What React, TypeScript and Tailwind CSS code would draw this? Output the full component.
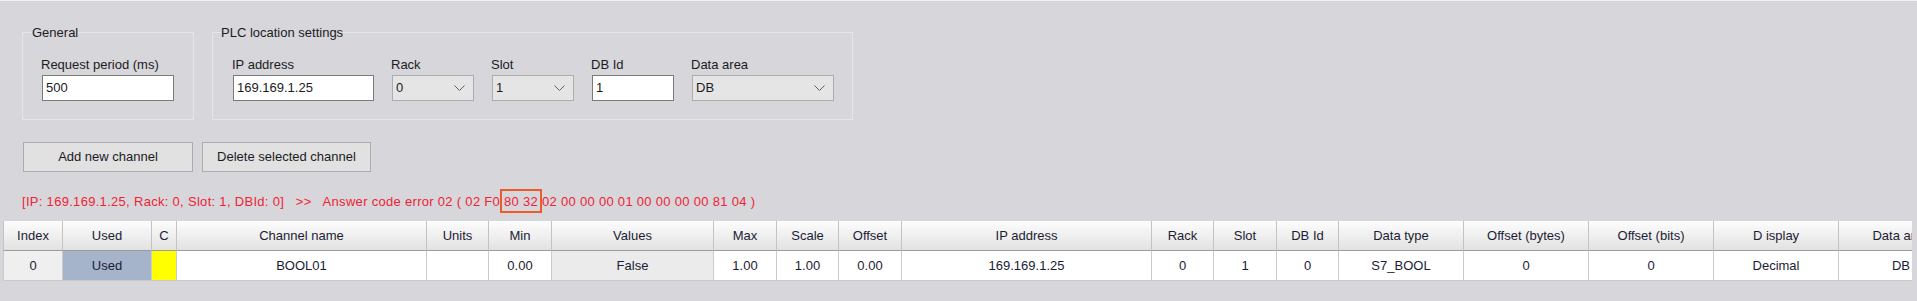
import React from 'react';

const columns = [
  { title: 'Index', w: 'w-[60px]', value: '0', cell: 'bg-[#efefef]' },
  { title: 'Used', w: 'w-[89px]', value: 'Used', cell: 'bg-[#a5b4ca]' },
  { title: 'C', w: 'w-[25px]', value: '', cell: 'bg-[#ffff00]' },
  { title: 'Channel name', w: 'w-[250px]', value: 'BOOL01', cell: 'bg-white' },
  { title: 'Units', w: 'w-[62px]', value: '', cell: 'bg-white' },
  { title: 'Min', w: 'w-[63px]', value: '0.00', cell: 'bg-white' },
  { title: 'Values', w: 'w-[162px]', value: 'False', cell: 'bg-[#ebebeb]' },
  { title: 'Max', w: 'w-[63px]', value: '1.00', cell: 'bg-white' },
  { title: 'Scale', w: 'w-[62px]', value: '1.00', cell: 'bg-white' },
  { title: 'Offset', w: 'w-[63px]', value: '0.00', cell: 'bg-white' },
  { title: 'IP address', w: 'w-[250px]', value: '169.169.1.25', cell: 'bg-white' },
  { title: 'Rack', w: 'w-[62px]', value: '0', cell: 'bg-white' },
  { title: 'Slot', w: 'w-[63px]', value: '1', cell: 'bg-white' },
  { title: 'DB Id', w: 'w-[62px]', value: '0', cell: 'bg-white' },
  { title: 'Data type', w: 'w-[125px]', value: 'S7_BOOL', cell: 'bg-white' },
  { title: 'Offset (bytes)', w: 'w-[125px]', value: '0', cell: 'bg-white' },
  { title: 'Offset (bits)', w: 'w-[125px]', value: '0', cell: 'bg-white' },
  { title: 'D isplay', w: 'w-[125px]', value: 'Decimal', cell: 'bg-white' },
  { title: 'Data area', w: 'w-[125px]', value: 'DB', cell: 'bg-white' },
];

const Chevron = () => (
  <svg width="11" height="7" viewBox="0 0 11 7" className="shrink-0">
    <polyline points="0.5,0.5 5.5,5.5 10.5,0.5" fill="none" stroke="#5f5f5f" strokeWidth="1" />
  </svg>
);

const Field = ({ label, w, children }: { label: string; w: string; children: React.ReactNode }) => (
  <div className={`flex flex-col ${w}`}>
    <div className="leading-[15px] -ml-[1px]">{label}</div>
    <div className="mt-[3px]">{children}</div>
  </div>
);

const TextBox = ({ value }: { value: string }) => (
  <div className="h-[26px] border border-[#7a7a7a] bg-white px-[3px] flex items-center">{value}</div>
);

const Combo = ({ value }: { value: string }) => (
  <div className="h-[26px] border border-[#adadad] bg-[#e5e5e5] pl-[3px] pr-[8px] flex items-center justify-between">
    <span>{value}</span>
    <Chevron />
  </div>
);

export default function App() {
  return (
    <div className="w-[1917px] h-[301px] overflow-hidden bg-[#d7d6da] border-t border-[#f1f0f2] text-[13px] text-[#1b1b1f] font-['Liberation_Sans',Arial,sans-serif]">
      <div className="flex pt-[24px]">
        <fieldset className="ml-[22px] w-[172px] h-[95px] border border-[#e6e5e8] px-[9px]">
          <legend className="leading-[15px]">General</legend>
          <div className="pl-[10px] mt-[17px]">
            <Field label="Request period (ms)" w="w-[132px]">
              <TextBox value="500" />
            </Field>
          </div>
        </fieldset>
        <fieldset className="ml-[18px] w-[641px] h-[95px] border border-[#e6e5e8] px-[8px]">
          <legend className="leading-[15px]">PLC location settings</legend>
          <div className="pl-[12px] mt-[17px] flex gap-[18px]">
            <Field label="IP address" w="w-[141px]">
              <TextBox value="169.169.1.25" />
            </Field>
            <Field label="Rack" w="w-[82px]">
              <Combo value="0" />
            </Field>
            <Field label="Slot" w="w-[82px]">
              <Combo value="1" />
            </Field>
            <Field label="DB Id" w="w-[82px]">
              <TextBox value="1" />
            </Field>
            <Field label="Data area" w="w-[142px]">
              <Combo value="DB" />
            </Field>
          </div>
        </fieldset>
      </div>

      <div className="flex mt-[22px] pl-[23px] gap-[9px]">
        <button className="w-[170px] h-[30px] border border-[#adadad] bg-[#e1e1e1]">Add new channel</button>
        <button className="w-[169px] h-[30px] border border-[#adadad] bg-[#e1e1e1]">Delete selected channel</button>
      </div>

      <div className="mt-[22px] pl-[22px] leading-[15px] tracking-[0.3px] text-[#f02236] whitespace-pre">
        {'[IP: 169.169.1.25, Rack: 0, Slot: 1, DBId: 0]   >>   Answer code error 02 ( 02 F0 '}
        <span className="relative">
          80 32
          <span className="absolute -left-[4px] -right-[4px] -top-[5px] -bottom-[4px] border-2 border-[#ee5a2a]" />
        </span>
        {' 02 00 00 00 01 00 00 00 00 81 04 )'}
      </div>

      <div className="mt-[12px] ml-[3px] w-[1909px] overflow-hidden text-[#1c1c34]">
        <div className="flex w-max">
          {columns.map((c, i) => (
            <div
              key={c.title}
              className={`${c.w} shrink-0 h-[30px] flex items-center justify-center whitespace-nowrap bg-gradient-to-b from-[#fdfdfd] to-[#e2e2e2] border-r border-b border-b-[#9c9c9c] border-r-[#c3c3c3] ${i === 0 ? 'border-l border-l-[#c3c3c3]' : ''}`}
            >
              {c.title}
            </div>
          ))}
        </div>
        <div className="flex w-max">
          {columns.map((c, i) => (
            <div
              key={c.title}
              className={`${c.w} shrink-0 h-[30px] flex items-center justify-center whitespace-nowrap border-r border-b border-[#cbcbcb] ${c.cell} ${i === 0 ? 'border-l' : ''}`}
            >
              {c.value}
            </div>
          ))}
        </div>
      </div>
    </div>
  );
}
